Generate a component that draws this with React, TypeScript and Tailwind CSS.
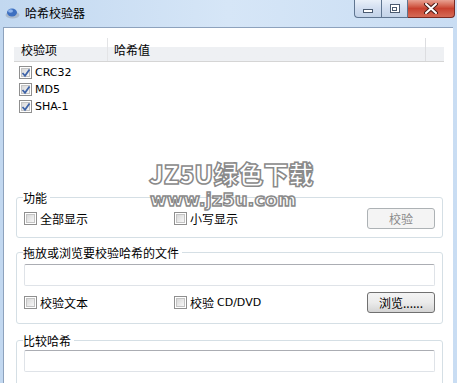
import React from "react";

const cjk = { fontFamily: '"Noto Sans CJK SC", "Liberation Sans", sans-serif' };
const latin = { fontFamily: '"DejaVu Sans", "Liberation Sans", sans-serif' };

function CheckBox({ checked }: { checked?: boolean }) {
  return (
    <span className="relative inline-flex h-[13px] w-[13px] shrink-0 items-center justify-center border border-[#8f8f8f] bg-white">
      <span className="h-[9px] w-[9px] border border-[#c4c4c4] bg-gradient-to-br from-[#d8d8d8] to-[#f7f7f7]" />
      {checked && (
        <svg className="absolute left-[1px] top-[1px]" width="10" height="10" viewBox="0 0 10 10">
          <path d="M1.5 5 L4 7.8 L8.5 1.5" fill="none" stroke="#3f64a8" strokeWidth="1.8" />
        </svg>
      )}
    </span>
  );
}

function Check({ label, checked, latinText }: { label: string; checked?: boolean; latinText?: boolean }) {
  return (
    <label className="flex items-center gap-[3px] text-[12px] leading-[15px] text-black">
      <CheckBox checked={checked} />
      <span style={latinText ? latin : cjk} className={latinText ? "text-[11px]" : ""}>
        {label}
      </span>
    </label>
  );
}

function WinButton({ children, disabled }: { children: React.ReactNode; disabled?: boolean }) {
  return (
    <button
      style={cjk}
      className={
        disabled
          ? "ml-auto h-[21px] w-[68px] rounded-[3px] border border-[#adb2b5] bg-[#f4f4f4] text-[12px] text-[#8a8a8a]"
          : "ml-auto h-[21px] w-[68px] rounded-[3px] border border-[#707070] bg-gradient-to-b from-[#f4f4f4] via-[#ebebeb] to-[#d4d4d4] text-[12px] text-black"
      }
    >
      {children}
    </button>
  );
}

function TextBox() {
  return (
    <div className="h-[22px] w-[411px] rounded-[2px] border border-[#dfe3e8] border-t-[#abadb3] bg-white" />
  );
}

function Group({ title, children }: { title: string; children: React.ReactNode }) {
  return (
    <fieldset className="mx-[12px] w-[427px] rounded-[3px] border border-[#d5dfe5] px-[7px]">
      <legend style={cjk} className="ml-[-1px] pr-[3px] text-[12px] leading-[13px] text-black">
        {title}
      </legend>
      {children}
    </fieldset>
  );
}

export default function App() {
  return (
    <div className="relative flex h-[383px] w-[457px] flex-col overflow-hidden bg-gradient-to-r from-[#c2d8f0] via-[#d6e6f7] to-[#c9ddf3]">
      {/* title bar */}
      <div className="flex h-[27px] shrink-0 items-start">
        <div className="flex items-center pl-[5px] pt-[5px]">
          <svg width="15" height="14" viewBox="0 0 15 14">
            <ellipse cx="7.5" cy="9" rx="7" ry="3.5" fill="#a9b9cc" />
            <ellipse cx="7" cy="6.5" rx="5" ry="4" fill="#3d6fc0" />
            <ellipse cx="5.5" cy="5" rx="2.5" ry="1.8" fill="#8fb4ea" />
          </svg>
          <span style={cjk} className="ml-[5px] text-[12px] leading-[16px] text-black">
            哈希校验器
          </span>
        </div>
        <div className="ml-auto mr-[2px] flex h-[18px]">
          <div className="flex h-[18px] w-[27px] items-center justify-center rounded-bl-[4px] border border-r-0 border-t-0 border-[#5f7590] bg-gradient-to-b from-[#e9f0f9] via-[#d2def0] to-[#c3d3e8]">
            <span className="mt-[4px] h-[4px] w-[10px] border border-[#4a5a70] bg-white" />
          </div>
          <div className="flex h-[18px] w-[27px] items-center justify-center border border-t-0 border-[#5f7590] bg-gradient-to-b from-[#e9f0f9] via-[#d2def0] to-[#c3d3e8]">
            <span className="flex h-[9px] w-[10px] items-center justify-center border border-[#4a5a70] bg-white">
              <span className="h-[4px] w-[5px] border border-[#4a5a70]" />
            </span>
          </div>
          <div className="flex h-[18px] w-[47px] items-center justify-center rounded-br-[4px] border border-l-0 border-t-0 border-[#7a2a22] bg-gradient-to-b from-[#e8a192] via-[#c8412f] to-[#d56a55]">
            <svg width="14" height="11" viewBox="0 0 14 11">
              <path d="M2 1 L12 10 M12 1 L2 10" stroke="#4a1b16" strokeWidth="4" strokeLinecap="round" />
              <path d="M2 1 L12 10 M12 1 L2 10" stroke="#ffffff" strokeWidth="2" strokeLinecap="round" />
            </svg>
          </div>
        </div>
      </div>

      {/* client area */}
      <div className="mx-[3px] mr-[4px] flex flex-1 flex-col border-l border-t border-[#8da2bd] bg-white">
        {/* list view */}
        <div className="mx-[10px] mt-[10px] h-[153px] w-[430px]">
          <div className="flex h-[24px] border-b border-[#d5d5d5] bg-gradient-to-b from-white from-40% to-[#eef0f3] to-40%">
            <div style={cjk} className="flex w-[94px] items-center border-r border-[#e3e4e6] pl-[7px] text-[12px] text-black">
              校验项
            </div>
            <div style={cjk} className="flex w-[318px] items-center border-r border-[#dcdde0] pl-[6px] text-[12px] text-black">
              哈希值
            </div>
            <div className="flex-1" />
          </div>
          <div className="flex flex-col pl-[5px] pt-[2px]">
            <div className="flex h-[17px] items-center">
              <Check label="CRC32" checked latinText />
            </div>
            <div className="flex h-[17px] items-center">
              <Check label="MD5" checked latinText />
            </div>
            <div className="flex h-[17px] items-center">
              <Check label="SHA-1" checked latinText />
            </div>
          </div>
        </div>

        <Group title="功能">
          <div className="mb-[8px] mt-[4px] flex h-[21px] items-center">
            <div className="w-[150px]">
              <Check label="全部显示" />
            </div>
            <Check label="小写显示" />
            <WinButton disabled>校验</WinButton>
          </div>
        </Group>

        <div className="h-[8px]" />

        <Group title="拖放或浏览要校验哈希的文件">
          <div className="mt-[5px]">
            <TextBox />
          </div>
          <div className="mb-[10px] mt-[6px] flex h-[21px] items-center">
            <div className="w-[150px]">
              <Check label="校验文本" />
            </div>
            <label className="flex items-center gap-[3px] text-[12px] leading-[15px] text-black">
              <CheckBox />
              <span style={cjk}>校验</span>
              <span style={latin} className="text-[11px]">CD/DVD</span>
            </label>
            <WinButton>浏览......</WinButton>
          </div>
        </Group>

        <div className="h-[10px]" />

        <Group title="比较哈希">
          <div className="mt-[3px] pb-[20px]">
            <TextBox />
          </div>
        </Group>
      </div>

      {/* watermark */}
      <div className="pointer-events-none absolute left-[149px] top-[160px] flex flex-col items-start gap-[4px]">
        <span
          style={{ fontFamily: '"Noto Sans CJK SC", "DejaVu Sans", sans-serif' }}
          className="text-[25px] font-black leading-[27px] text-white [-webkit-text-stroke:1.5px_#8a8a8a]"
        >
          JZ5U绿色下载
        </span>
        <span
          style={{ fontFamily: '"DejaVu Sans", sans-serif' }}
          className="ml-[1px] text-[18px] font-bold leading-[18px] text-white [-webkit-text-stroke:1.5px_#8a8a8a]"
        >
          www.jz5u.com
        </span>
      </div>
    </div>
  );
}
